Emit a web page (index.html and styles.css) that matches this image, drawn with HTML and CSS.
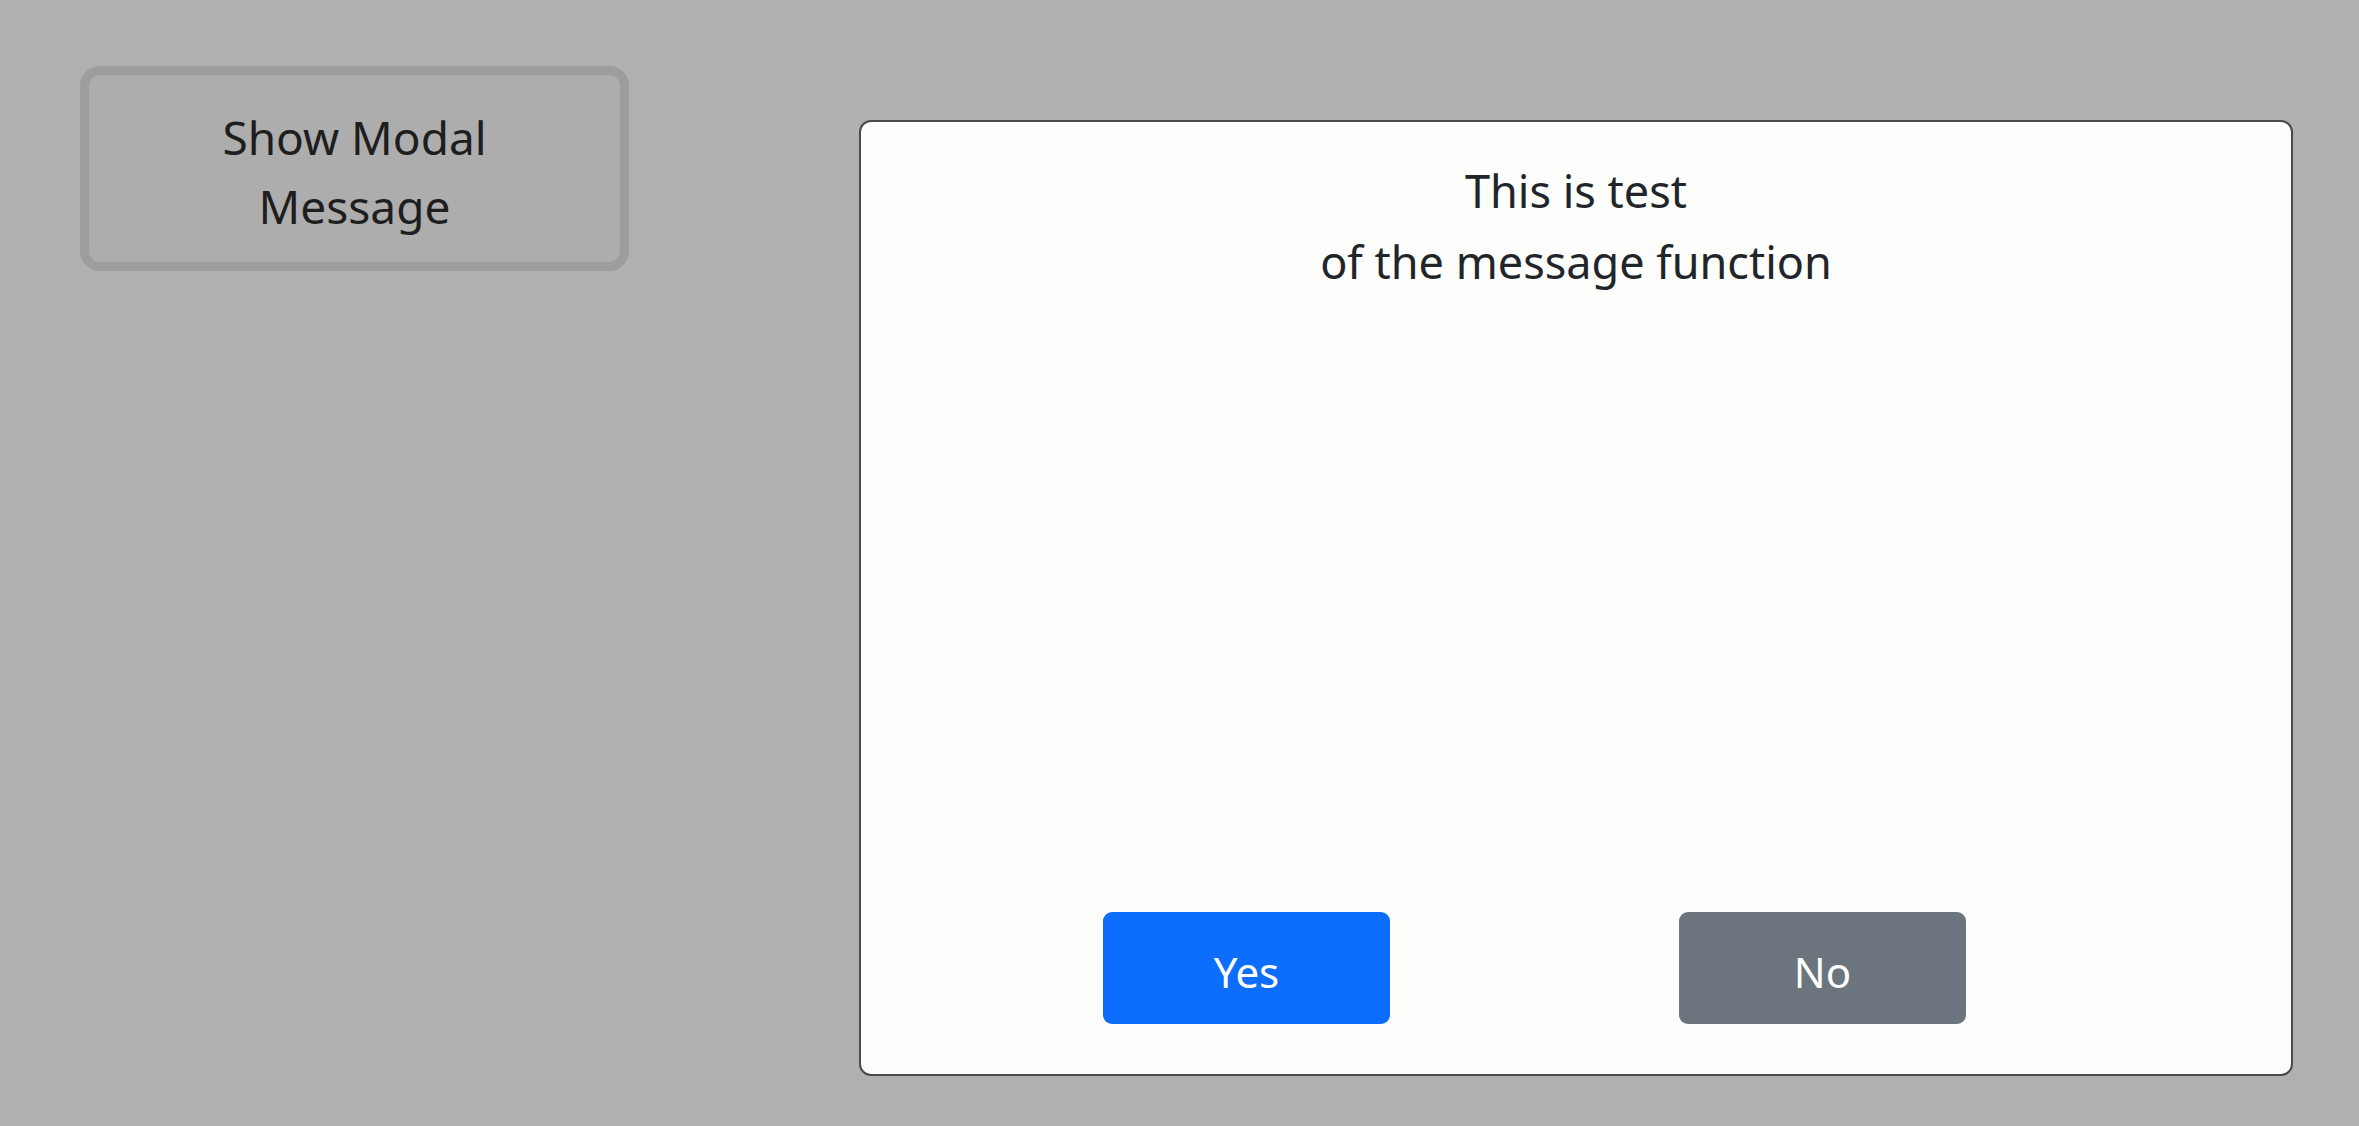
FILE: index.html
```html
<!DOCTYPE html>
<html lang="en">
<head>
  <meta charset="UTF-8" />
  <meta name="viewport" content="width=device-width, initial-scale=1" />
  <title>Modal Message Test</title>
  <link rel="stylesheet" href="styles.css">
</head>
<body>
  <div class="page">
    <button class="show-btn" id="showBtn">Show Modal<br>Message</button>
  </div>

  <div class="overlay" id="overlay">
    <div class="modal">
      <div class="modal-text">
        <p>This is test</p>
        <p>of the message function</p>
      </div>
      <div class="modal-buttons">
        <button class="btn btn-yes">Yes</button>
        <button class="btn btn-no">No</button>
      </div>
    </div>
  </div>
</body>
</html>
```

FILE: styles.css
```css
html, body {
  margin: 0;
  height: 100%;
}
body {
  font-family: "Noto Sans", "Open Sans", sans-serif;
  background: #b0b0b0;
  color: #212529;
}
.page {
  padding: 66px 0 0 80px;
}
.show-btn {
  width: 549px;
  height: 205px;
  border: 9px solid #9d9d9d;
  border-radius: 20px;
  background: #adadad;
  color: #1e1e1e;
  font-family: inherit;
  font-size: 46px;
  line-height: 69px;
  padding: 6px 0 0;
}
.overlay {
  position: fixed;
  inset: 0;
  padding: 120px 0 0 859px;
}
.modal {
  width: 1434px;
  height: 956px;
  box-sizing: border-box;
  background: #fdfdfb;
  border: 2px solid #4a4a4a;
  border-radius: 12px;
  display: flex;
  flex-direction: column;
}
.modal-text {
  text-align: center;
  padding-top: 33px;
  font-size: 45px;
  line-height: 71px;
  flex: 1;
}
.modal-text p {
  margin: 0;
}
.modal-buttons {
  display: flex;
  gap: 289px;
  padding: 0 0 50px 242px;
}
.btn {
  width: 287px;
  height: 112px;
  border: none;
  border-radius: 9px;
  color: #fff;
  font-family: inherit;
  font-size: 42px;
  padding: 6px 0 0;
}
.btn-yes {
  background: #0d6efd;
}
.btn-no {
  background: #6c757d;
}
```
